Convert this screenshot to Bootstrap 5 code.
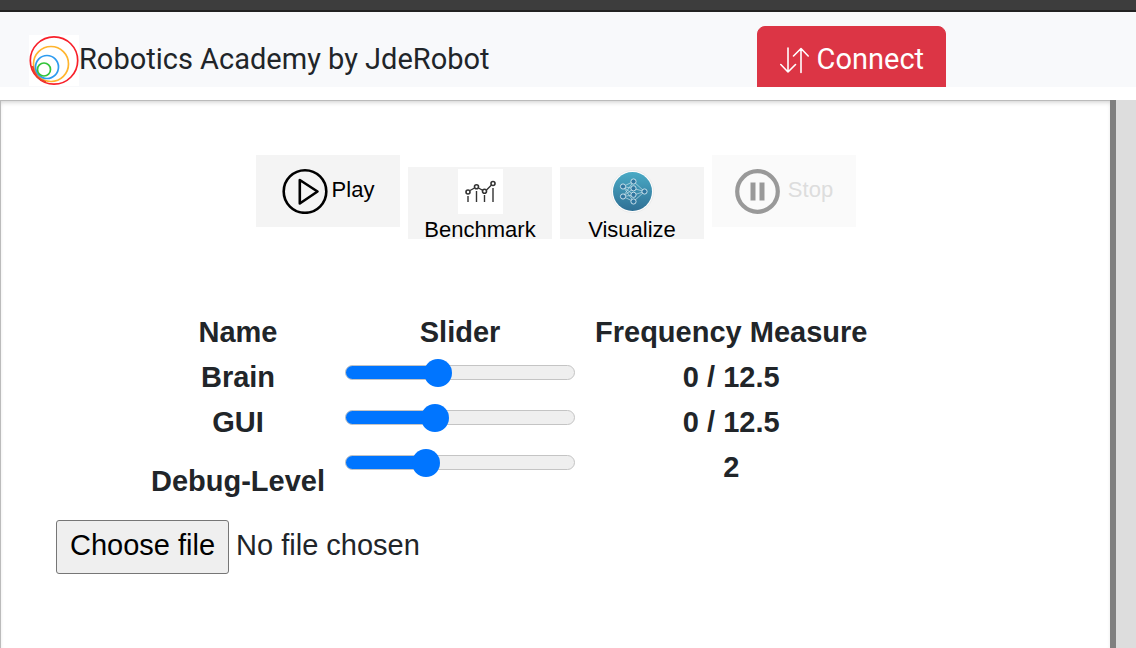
<!DOCTYPE html>
<html lang="en">
<head>
<meta charset="utf-8">
<meta name="viewport" content="width=device-width, initial-scale=1">
<title>Robotics Academy by JdeRobot</title>
<link href="https://cdn.jsdelivr.net/npm/bootstrap@5.3.0/dist/css/bootstrap.min.css" rel="stylesheet">
<style>
  body { font-family: "Liberation Sans", Arial, sans-serif; font-size: 29px; }
  .window-edge { height: 12px; background: #3d3d3d; border-bottom: 2px solid #222; }
  .top-nav { height: 75px; font-family: Roboto, sans-serif; line-height: 48px; background: #f8f9fb; }
  .brand-link { padding: 23px 0 0 29px; }
  .connect-btn { width: 189px; height: 74px; padding: 0 0 6px; margin-top: 14px; font-size: 29px; border-radius: 8px; }
  .workspace { margin-top: 13px; }
  .exercise { border: solid #bbb; border-width: 1px 0 0 1px; box-shadow: inset 0 3px 5px -2px #ccc; padding: 54px 55px 24px; }
  .divider { width: 6px; background: #808080; }
  .side-pane { width: 20px; background: #ddd; }
  .tool-btn { width: 144px; height: 72px; border: 0; padding: 0 0 0 1px; background: #f4f4f4; color: #000; font-size: 22px; line-height: 32px; }
  .tool-btn:disabled { background: #fafafa; color: #ddd; }
  .tool-btn:not(.tool-stacked) span { padding-bottom: 2px; }
  .tool-stacked { margin-top: 12px; padding-top: 2px; }
  .freq-table { margin: 71px 0 0 85px; line-height: 43px; }
  .freq-table th, .freq-table td { padding: 1px 10px; vertical-align: top; text-align: center; font-weight: 700; }
  .freq-table .low-cell { padding-top: 15px; }
  .freq-slider { --fill: calc(14px + (100% - 28px) * var(--level)); appearance: none; -webkit-appearance: none; display: block; width: 230px; height: 28px; margin: 2px 0 0; background: none; }
  .freq-slider::-webkit-slider-runnable-track { height: 15px; border: 1px solid #c4c4c4; border-radius: 8px; background: linear-gradient(#0075ff, #0075ff) 0 0 / var(--fill) 100% no-repeat border-box #efefef; }
  .freq-slider::-webkit-slider-thumb { -webkit-appearance: none; width: 28px; height: 28px; margin-top: -7px; border-radius: 50%; background: #0075ff; }
  .file-row { margin-top: 16px; }
  .file-btn { height: 54px; padding: 0 13px; line-height: 48px; border: 1px solid #767676; border-radius: 3px; background: #efefef; color: #000; cursor: pointer; }
  .file-name { padding-left: 7px; line-height: 50px; }
</style>
</head>
<body class="bg-white d-flex flex-column vh-100 overflow-hidden">
<div class="window-edge flex-shrink-0"></div>
<nav class="top-nav row g-0 flex-shrink-0 overflow-hidden">
  <div class="col-8">
    <a href="#" class="brand-link d-flex align-items-start text-reset text-decoration-none">
      <svg width="50" height="51" viewBox="0 0 50 51" fill="none" stroke-width="1.7" aria-hidden="true">
        <path fill="#fff" d="M0 0h50v51H0z"/>
        <circle cx="25" cy="25.500" r="23.700" stroke="#f8202a"/>
        <circle cx="22" cy="29" r="17.500" stroke="#ffb52e"/>
        <circle cx="18" cy="32" r="11.500" stroke="#2d9bf0"/>
        <circle cx="15" cy="34.500" r="6.500" stroke="#33c43a"/>
        <path d="M3.500 31C5 40 9 44.500 17 47" stroke="#e8402a"/>
      </svg>
      <span>Robotics Academy by JdeRobot</span>
    </a>
  </div>
  <div class="col-4">
    <button type="button" class="connect-btn btn btn-danger d-flex align-items-center justify-content-center gap-2">
      <svg width="29" height="27" viewBox="0 0 29 27" fill="none" stroke="#fff" stroke-width="1.600" stroke-linecap="round" stroke-linejoin="round" aria-hidden="true"><path d="M8 1v24M.8 17.500L8 25l7.500-7.500M21 25.500V1.500M13.500 9L21 1.500 28.200 9"/></svg>
      <span>Connect</span>
    </button>
  </div>
</nav>
<main class="workspace d-flex flex-grow-1">
  <section class="exercise flex-grow-1">
    <div class="d-flex justify-content-center align-items-start gap-2">
      <button type="button" class="tool-btn d-flex align-items-center justify-content-center">
        <svg class="me-1 flex-shrink-0" width="46" height="46" viewBox="0 0 46 46" fill="none" stroke="#000" stroke-linejoin="round" aria-hidden="true"><circle cx="23" cy="23.500" r="21.300" stroke-width="2.600"/><path d="M17.800 12v23.500L35.500 23.500z" stroke-width="2.600"/></svg>
        <span>Play</span>
      </button>
      <button type="button" class="tool-btn tool-stacked d-flex flex-column align-items-center">
        <svg class="flex-shrink-0" width="45" height="45" viewBox="0 0 45 45" fill="none" stroke="#333" stroke-width="1.400" aria-hidden="true"><path fill="#fff" stroke="none" d="M0 0h45v45H0z"/><path d="M10 27v6M18.500 22v11M26.500 26v7M35 19v14"/><path d="M12 21.500l4.500-2.500M20.500 19l4.500 2.500M28.500 21l5-5"/><g stroke-width="1.600"><circle cx="10" cy="23" r="2"/><circle cx="18.500" cy="17.700" r="2"/><circle cx="26.500" cy="22.300" r="2"/><circle cx="35" cy="14.500" r="2"/></g></svg>
        <span>Benchmark</span>
      </button>
      <button type="button" class="tool-btn tool-stacked d-flex flex-column align-items-center">
        <svg class="flex-shrink-0" width="45" height="45" viewBox="0 0 45 45" aria-hidden="true">
          <defs><linearGradient id="disc" x1="0" y1="0" x2="0" y2="1"><stop stop-color="#4aaac5"/><stop offset="1" stop-color="#2f7095"/></linearGradient></defs>
          <circle cx="22.500" cy="22.500" r="21" fill="#fff" stroke="#eaeaea"/><circle cx="22.500" cy="22.500" r="19.500" fill="url(#disc)"/>
          <path fill="none" stroke="#c5dfe9" stroke-width=".7" d="M13 17.500L23.500 12.500M13 17.500l10.500 2M13 17.500l10.500 8.500M13 17.500L23.500 32.500M13 27.500L23.500 12.500M13 27.500l10.500-8M13 27.500l10.500-1.500M13 27.500l10.500 5M23.500 12.500l11 10-11-3M23.500 26l11-3.500-11 10"/>
          <g fill="#2f759f" stroke="#d5e8ef" stroke-width=".9"><circle cx="13" cy="17.500" r="2.600"/><circle cx="13" cy="27.500" r="2.600"/><circle cx="23.500" cy="12.500" r="2.600"/><circle cx="23.500" cy="19.300" r="2.600"/><circle cx="23.500" cy="25.800" r="2.600"/><circle cx="23.500" cy="32.500" r="2.600"/><circle cx="34.500" cy="22.500" r="2.600"/></g>
        </svg>
        <span>Visualize</span>
      </button>
      <button type="button" class="tool-btn d-flex align-items-center justify-content-center" disabled>
        <svg class="me-2 flex-shrink-0" width="45" height="45" viewBox="0 0 45 45" fill="none" stroke="#999" aria-hidden="true"><circle cx="22.500" cy="22.500" r="20.300" stroke-width="4.200"/><path d="M18 13.500v18M27 13.500v18" stroke-width="5"/></svg>
        <span>Stop</span>
      </button>
    </div>
    <table class="freq-table">
      <thead><tr><th scope="col">Name</th><th scope="col">Slider</th><th scope="col">Frequency Measure</th></tr></thead>
      <tbody>
        <tr><th scope="row"><label for="brain">Brain</label></th><td><input id="brain" class="freq-slider" type="range" min="0" max="1000" value="391" style="--level:.391"></td><td>0 / 12.5</td></tr>
        <tr><th scope="row"><label for="gui">GUI</label></th><td><input id="gui" class="freq-slider" type="range" min="0" max="1000" value="377" style="--level:.377"></td><td>0 / 12.5</td></tr>
        <tr><th scope="row" class="low-cell"><label for="debug">Debug-Level</label></th><td><input id="debug" class="freq-slider" type="range" min="0" max="1000" value="332" style="--level:.332"></td><td>2</td></tr>
      </tbody>
    </table>
    <div class="file-row d-flex align-items-start position-relative">
      <input id="source" class="visually-hidden" type="file">
      <label class="file-btn" for="source">Choose file</label>
      <span class="file-name">No file chosen</span>
    </div>
  </section>
  <div class="divider"></div>
  <aside class="side-pane"></aside>
</main>
<script src="https://cdn.jsdelivr.net/npm/bootstrap@5.3.0/dist/js/bootstrap.bundle.min.js"></script>
<script>
  document.querySelectorAll('.freq-slider').forEach(function (slider) {
    slider.addEventListener('input', function () { slider.style.setProperty('--level', slider.value / 1000); });
  });
  document.getElementById('source').addEventListener('change', function () {
    document.querySelector('.file-name').textContent = this.files.length ? this.files[0].name : 'No file chosen';
  });
</script>
</body>
</html>
